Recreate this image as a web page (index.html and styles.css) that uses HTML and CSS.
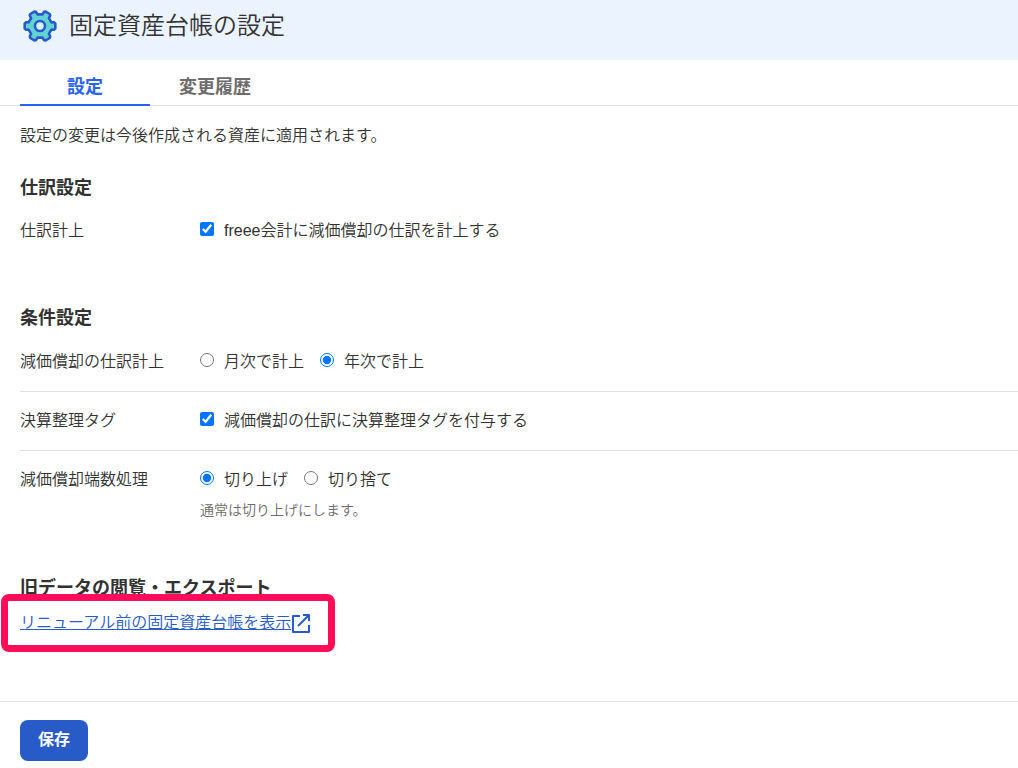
FILE: index.html
```html
<!DOCTYPE html>
<html lang="ja">
<head>
<meta charset="utf-8">
<meta name="viewport" content="width=device-width, initial-scale=1">
<title>固定資産台帳の設定</title>
<link rel="stylesheet" href="styles.css">
</head>
<body>
<header class="page-header">
  <svg class="gear" viewBox="0 0 34 34" aria-hidden="true">
    <path d="M28.2 13.2L31.2 13.4 32.3 14.6V19.4L31.2 20.6 28.2 20.8 25.9 24.8 27.2 27.5 26.7 29 22.6 31.4 21 31.1 19.3 28.6H14.7L13 31.1 11.4 31.4 7.3 29 6.8 27.5 8.1 24.8 5.8 20.8 2.8 20.6 1.7 19.4V14.6L2.8 13.4 5.8 13.2 8.1 9.2 6.8 6.5 7.3 5 11.4 2.6 13 2.9 14.7 5.4H19.3L21 2.9 22.6 2.6 26.7 5 27.2 6.5 25.9 9.2Z" fill="#62d2d4" stroke="#285ac8" stroke-width="2.6" stroke-linejoin="round"/>
    <circle cx="17" cy="17" r="5" fill="#d5f2f6" stroke="#285ac8" stroke-width="2.6"/>
  </svg>
  <h1 class="page-title">固定資産台帳の設定</h1>
</header>
<nav class="tabs">
  <a class="tab tab-active" href="#settings" aria-current="page">設定</a>
  <a class="tab" href="#history">変更履歴</a>
</nav>
<form class="settings-form">
  <main class="content" id="settings">
    <p class="lead">設定の変更は今後作成される資産に適用されます。</p>

    <section class="section">
      <h2 class="section-title">仕訳設定</h2>
      <div class="row row-single">
        <div class="row-label">仕訳計上</div>
        <div class="options">
          <label class="option"><input class="control" type="checkbox" checked>freee会計に減価償却の仕訳を計上する</label>
        </div>
      </div>
    </section>

    <section class="section">
      <h2 class="section-title">条件設定</h2>
      <div class="row" role="radiogroup" aria-labelledby="posting">
        <div class="row-label" id="posting">減価償却の仕訳計上</div>
        <div class="options">
          <label class="option"><input class="control" type="radio" name="posting">月次で計上</label>
          <label class="option"><input class="control" type="radio" name="posting" checked>年次で計上</label>
        </div>
      </div>
      <div class="row">
        <div class="row-label">決算整理タグ</div>
        <div class="options">
          <label class="option"><input class="control" type="checkbox" checked>減価償却の仕訳に決算整理タグを付与する</label>
        </div>
      </div>
      <div class="row" role="radiogroup" aria-labelledby="rounding">
        <div class="row-label" id="rounding">減価償却端数処理</div>
        <div>
          <div class="options">
            <label class="option"><input class="control" type="radio" name="rounding" checked>切り上げ</label>
            <label class="option"><input class="control" type="radio" name="rounding">切り捨て</label>
          </div>
          <p class="hint">通常は切り上げにします。</p>
        </div>
      </div>
    </section>

    <section class="section">
      <h2 class="section-title">旧データの閲覧・エクスポート</h2>
      <div class="legacy">
        <a class="legacy-link" href="#legacy"><span class="legacy-text">リニューアル前の固定資産台帳を表示</span><svg class="external" viewBox="0 0 20 20" aria-hidden="true"><path d="M9 3H2V19H18V12M12 2H18V8M18 2L7 13" fill="none" stroke="currentColor" stroke-width="2" stroke-linejoin="round"/></svg></a>
      </div>
    </section>
  </main>
  <footer class="footer">
    <button class="save" type="button">保存</button>
  </footer>
</form>
</body>
</html>
```
FILE: styles.css
```css
* {
  box-sizing: border-box;
}

body {
  margin: 0;
  background: #fff;
  color: #323232;
  font: 350 16px/24px "Liberation Sans", "Noto Sans CJK JP", sans-serif;
}

h1, h2, p {
  margin: 0;
}

.page-header {
  display: flex;
  align-items: center;
  gap: 12px;
  padding: 8px 23px 16px;
  background: #ebf3ff;
}

.gear {
  width: 34px;
  height: 34px;
  flex: none;
}

.page-title {
  font-size: 24px;
  line-height: 36px;
  font-weight: 350;
}

.tabs {
  display: flex;
  padding: 0 20px;
  border-bottom: 1px solid #e1e1e1;
}

.tab {
  min-width: 130px;
  margin-bottom: -1px;
  padding: 15px 20px 5px;
  border-bottom: 2px solid transparent;
  color: #6e6b6b;
  font-size: 18px;
  font-weight: 700;
  text-align: center;
  text-decoration: none;
}

.tab-active {
  border-color: #2864f0;
  color: #2864f0;
}

.content {
  padding: 18px 0 66px 20px;
}

.lead {
  margin-bottom: 28px;
}

.section + .section {
  margin-top: 37px;
}

.section-title {
  margin-bottom: 3px;
  font-size: 18px;
  font-weight: 700;
}

.row {
  display: grid;
  grid-template-columns: 180px 1fr;
  padding: 17px 0;
}

.row + .row {
  border-top: 1px solid #e1e1e1;
}

.row-single {
  padding: 16px 0 26px;
}

.options {
  display: flex;
  flex-wrap: wrap;
  column-gap: 16px;
}

.option {
  display: flex;
  align-items: center;
  gap: 10px;
}

.control {
  flex: none;
  width: 14px;
  height: 14px;
  margin: 0 0 4px;
  accent-color: #0075ff;
}

.hint {
  margin: 8px 0 2px;
  color: #6e6b6b;
  font-size: 14px;
  line-height: 20px;
}

.legacy {
  position: relative;
  padding-top: 8px;
}

.legacy::after {
  content: "";
  position: absolute;
  box-sizing: border-box;
  top: -9px;
  left: -19px;
  width: 334px;
  height: 58px;
  border: 7px solid #ff0d5a;
  border-radius: 8px;
  pointer-events: none;
}

.legacy-link {
  display: inline-flex;
  align-items: center;
  gap: 0;
  color: #285ac8;
  text-decoration: none;
}

.legacy-text {
  text-decoration: underline;
}

.external {
  width: 20px;
  height: 20px;
}

.footer {
  padding: 18px 20px 7px;
  border-top: 1px solid #dfe5e5;
}

.save {
  padding: 8px 18px 9px;
  border: 0;
  border-radius: 8px;
  background: #285ac8;
  color: #fff;
  font: inherit;
  font-weight: 700;
}
```
